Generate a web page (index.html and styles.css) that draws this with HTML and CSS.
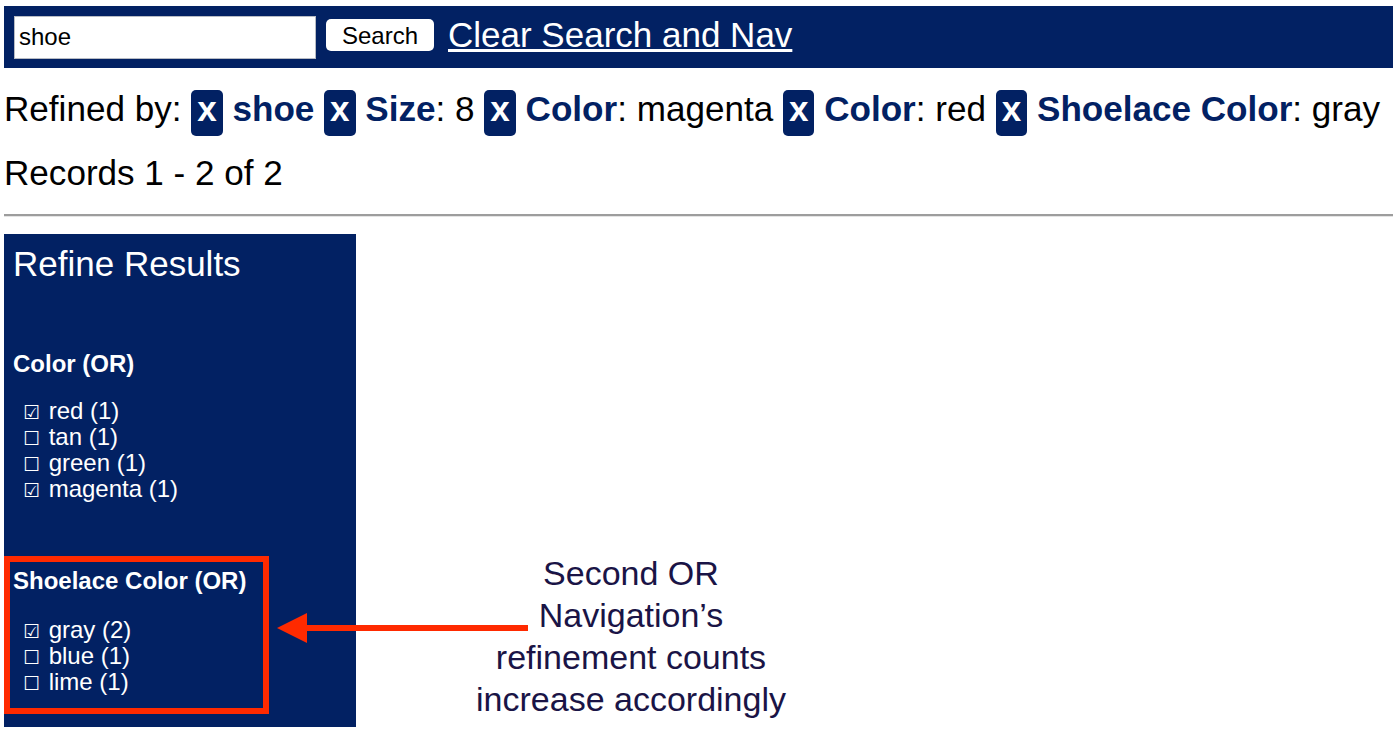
FILE: index.html
```html
<!DOCTYPE html>
<html lang="en">
<head>
  <meta charset="UTF-8">
  <title>Search Results</title>
  <link rel="stylesheet" href="styles.css">
</head>
<body>
  <form class="search-bar">
    <input type="text" name="q" value="shoe">
    <button type="submit">Search</button>
    <a href="#" class="clear-link">Clear Search and Nav</a>
  </form>

  <p class="refined">Refined by:
    <a href="#" class="remove">x</a> <b>shoe</b>
    <a href="#" class="remove">x</a> <b>Size</b>: 8
    <a href="#" class="remove">x</a> <b>Color</b>: magenta
    <a href="#" class="remove">x</a> <b>Color</b>: red
    <a href="#" class="remove">x</a> <b>Shoelace Color</b>: gray
  </p>

  <p class="records">Records 1 - 2 of 2</p>

  <hr>

  <div class="content">
    <div class="sidebar">
      <h2>Refine Results</h2>

      <div class="facet">
        <h3>Color (OR)</h3>
        <ul>
          <li><span class="box">&#9745;</span> red (1)</li>
          <li><span class="box">&#9744;</span> tan (1)</li>
          <li><span class="box">&#9744;</span> green (1)</li>
          <li><span class="box">&#9745;</span> magenta (1)</li>
        </ul>
      </div>

      <!-- highlighted for the note -->
      <div class="facet highlight">
        <h3>Shoelace Color (OR)</h3>
        <ul>
          <li><span class="box">&#9745;</span> gray (2)</li>
          <li><span class="box">&#9744;</span> blue (1)</li>
          <li><span class="box">&#9744;</span> lime (1)</li>
        </ul>
      </div>
    </div>

    <svg class="arrow" width="251" height="32" viewBox="0 0 251 32">
      <polygon points="0,16 30,1 30,31" fill="#ff2a00"/>
      <rect x="29" y="13" width="222" height="6" fill="#ff2a00"/>
    </svg>

    <div class="note">
      Second OR<br>
      Navigation&rsquo;s<br>
      refinement counts<br>
      increase accordingly
    </div>
  </div>
</body>
</html>
```

FILE: styles.css
```css
body {
  margin: 6px 0 0 4px;
  font-family: "Liberation Sans", Arial, sans-serif;
  color: #000;
  background: #fff;
}

.search-bar {
  display: flex;
  align-items: center;
  height: 62px;
  padding-left: 10px;
  background: #022163;
}

.search-bar input {
  width: 302px;
  height: 43px;
  box-sizing: border-box;
  margin: 0;
  padding: 0 4px;
  font-family: "Liberation Sans", Arial, sans-serif;
  font-size: 24px;
  border: 1px solid #b8bcc4;
  border-radius: 0;
  background: #fff;
  color: #000;
}

.search-bar button {
  width: 108px;
  height: 32px;
  margin: 0 0 5px 10px;
  padding: 2px 0 0;
  font-family: "Liberation Sans", Arial, sans-serif;
  font-size: 24px;
  line-height: 30px;
  border: none;
  border-radius: 5px;
  background: #fff;
  color: #000;
}

.clear-link {
  margin: 0 0 5px 14px;
  font-size: 35px;
  line-height: 40px;
  color: #fff;
}

.refined, .records {
  margin: 0;
  font-size: 35.1px;
  line-height: 46px;
}

.refined {
  margin-top: 18px;
}

.refined b {
  color: #022163;
}

.remove {
  display: inline-block;
  padding: 0 6px 8px;
  line-height: 38px;
  border-radius: 5px;
  background: #022163;
  color: #fff;
  font-weight: bold;
  text-decoration: none;
}

.records {
  margin-top: 14px;
}

hr {
  height: 0;
  margin: 18px 0 0;
  border: none;
  border-top: 2px solid #9d9d9d;
  border-bottom: 1px solid #e4e4e4;
}

.content {
  position: relative;
  margin-top: 17px;
}

.sidebar {
  width: 352px;
  box-sizing: border-box;
  padding: 10px 0 32px 9px;
  background: #022163;
  color: #fff;
}

.sidebar h2 {
  margin: 0;
  font-size: 35px;
  font-weight: normal;
  line-height: 40px;
}

.facet {
  margin-top: 66px;
}

.facet + .facet {
  margin-top: 65px;
}

.facet h3 {
  margin: 0;
  font-size: 24px;
  line-height: 28px;
}

.facet ul {
  margin: 20px 0 0;
  padding: 0 0 0 10px;
  list-style: none;
  font-size: 24px;
  line-height: 26px;
}

.highlight ul {
  margin-top: 22px;
}

.box {
  display: inline-block;
  width: 16px;
  font-family: "DejaVu Sans", sans-serif;
  font-size: 19px;
  line-height: 0;
  margin-right: 3px;
}

.highlight {
  position: relative;
}

.highlight::after {
  content: "";
  position: absolute;
  left: -9px;
  top: -11px;
  width: 265px;
  height: 158px;
  box-sizing: border-box;
  border: 6px solid #ff2a00;
}

.arrow {
  position: absolute;
  left: 273px;
  top: 378px;
}

.note {
  position: absolute;
  left: 447px;
  top: 318px;
  width: 360px;
  text-align: center;
  font-size: 34px;
  line-height: 42px;
  color: #1a1446;
}
```
